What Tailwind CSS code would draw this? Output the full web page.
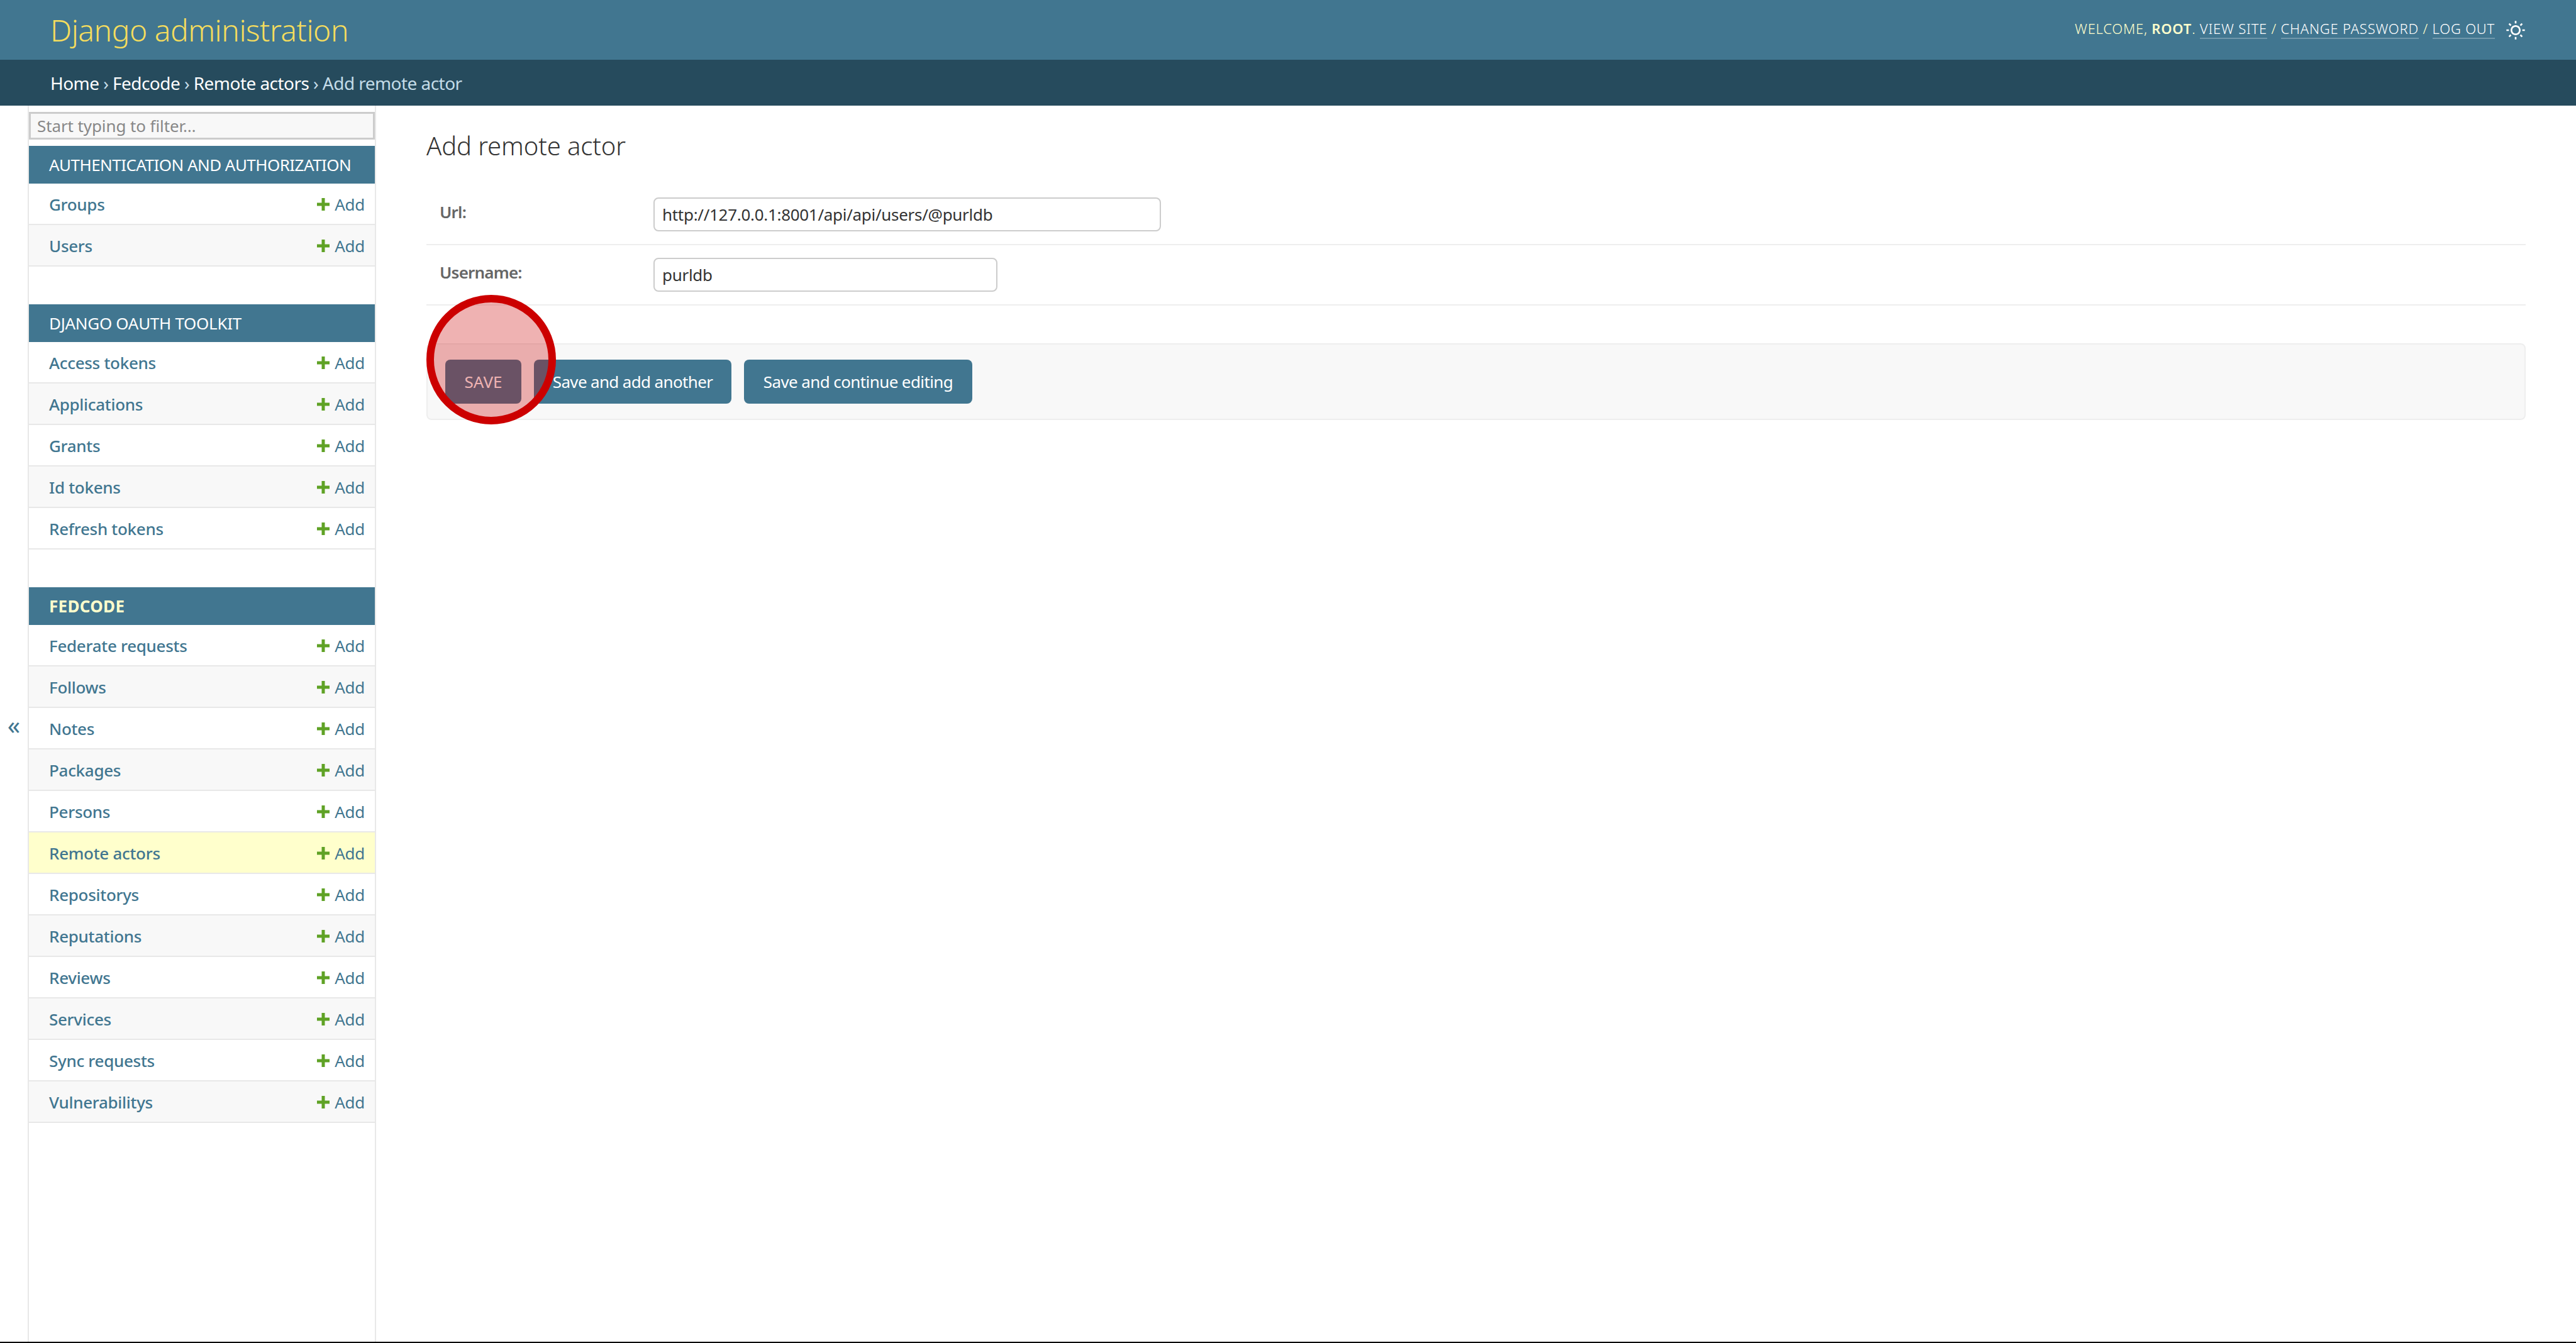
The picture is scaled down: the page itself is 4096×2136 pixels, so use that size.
<!DOCTYPE html>
<html lang="en">
<head>
    <meta charset="UTF-8">
    <title>Add remote actor | Django site admin</title>
    <script src="https://cdn.jsdelivr.net/npm/@tailwindcss/browser@4"></script>
</head>
<body class="relative flex h-screen flex-col overflow-hidden bg-white font-['Noto_Sans',sans-serif] text-[26px] text-[#333]">
    <!-- Header -->
    <header class="flex h-[95px] shrink-0 items-center justify-between bg-[#417690] pl-[80px] pr-[80px]">
        <h1 class="text-[48px] font-light tracking-[-0.5px] text-[#f5dd5d]">Django administration</h1>
        <div class="flex items-center gap-[17px] text-[22px] font-light uppercase tracking-[0.8px] text-[#ffffcc]">
            <div class="-mt-[4px]">
                Welcome, <strong class="font-semibold">root</strong>.
                <a class="border-b-2 border-white/25 text-white">View site</a> /
                <a class="border-b-2 border-white/25 text-white">Change password</a> /
                <a class="border-b-2 border-white/25 text-white">Log out</a>
            </div>
            <svg class="h-[32px] w-[32px] fill-white" viewBox="0 0 24 24"><path d="M12 18C8.68629 18 6 15.3137 6 12C6 8.68629 8.68629 6 12 6C15.3137 6 18 8.68629 18 12C18 15.3137 15.3137 18 12 18ZM12 16C14.2091 16 16 14.2091 16 12C16 9.79086 14.2091 8 12 8C9.79086 8 8 9.79086 8 12C8 14.2091 9.79086 16 12 16ZM11 1H13V4H11V1ZM11 20H13V23H11V20ZM3.51472 4.92893L4.92893 3.51472L7.05025 5.63604L5.63604 7.05025L3.51472 4.92893ZM16.9497 18.364L18.364 16.9497L20.4853 19.0711L19.0711 20.4853L16.9497 18.364ZM19.0711 3.51472L20.4853 4.92893L18.364 7.05025L16.9497 5.63604L19.0711 3.51472ZM5.63604 16.9497L7.05025 18.364L4.92893 20.4853L3.51472 19.0711L5.63604 16.9497ZM23 11V13H20V11H23ZM4 11V13H1V11H4Z"/></svg>
        </div>
    </header>

    <!-- Breadcrumbs -->
    <div class="flex h-[73px] shrink-0 items-center bg-[#264b5d] px-[80px] text-[28px] tracking-[-0.55px] text-[#c4dce8]">
        <a class="text-white">Home</a>&nbsp;›&nbsp;<a class="text-white">Fedcode</a>&nbsp;›&nbsp;<a class="text-white">Remote actors</a>&nbsp;›&nbsp;Add remote actor
    </div>

    <div class="flex min-h-0 flex-1 border-b-2 border-black">
        <!-- Toggle -->
        <div class="flex w-[46px] shrink-0 items-center justify-center border-r-2 border-[#e8e8e8] pt-[4px] text-[40px] text-[#417690]">«</div>

        <!-- Sidebar -->
        <aside class="w-[552px] shrink-0 border-r-2 border-[#e8e8e8] tracking-[-0.3px]">
            <div class="py-[10px]">
                <input class="block h-[44px] w-full border-[3px] border-[#cccccc] bg-[#f8f8f8] px-[10px] text-[26px] tracking-[-0.1px] placeholder:text-[#888]" placeholder="Start typing to filter…">
            </div>

            <section class="mb-[60px]">
                <h2 class="flex h-[60px] items-center whitespace-nowrap bg-[#417690] px-[32px] pt-[1px] text-[26px] uppercase tracking-[-0.55px] text-white">Authentication and Authorization</h2>
                <a class="flex h-[66px] items-center justify-between border-b-2 border-[#e8e8e8] bg-white pl-[32px] pr-[16px] pt-[2px] font-medium text-[#417690]">Groups<span class="flex items-center gap-[8px] font-normal"><svg class="h-[20px] w-[20px] fill-[#5fa225]" viewBox="0 0 20 20"><path d="M7.5 0h5v7.5H20v5h-7.5V20h-5v-7.5H0v-5h7.5z"/></svg>Add</span></a>
                <a class="flex h-[66px] items-center justify-between border-b-2 border-[#e8e8e8] bg-[#f8f8f8] pl-[32px] pr-[16px] pt-[2px] font-medium text-[#417690]">Users<span class="flex items-center gap-[8px] font-normal"><svg class="h-[20px] w-[20px] fill-[#5fa225]" viewBox="0 0 20 20"><path d="M7.5 0h5v7.5H20v5h-7.5V20h-5v-7.5H0v-5h7.5z"/></svg>Add</span></a>
            </section>

            <section class="mb-[60px]">
                <h2 class="flex h-[60px] items-center whitespace-nowrap bg-[#417690] px-[32px] pt-[1px] text-[26px] uppercase tracking-[-0.3px] text-white">Django OAuth Toolkit</h2>
                <a class="flex h-[66px] items-center justify-between border-b-2 border-[#e8e8e8] bg-white pl-[32px] pr-[16px] pt-[2px] font-medium text-[#417690]">Access tokens<span class="flex items-center gap-[8px] font-normal"><svg class="h-[20px] w-[20px] fill-[#5fa225]" viewBox="0 0 20 20"><path d="M7.5 0h5v7.5H20v5h-7.5V20h-5v-7.5H0v-5h7.5z"/></svg>Add</span></a>
                <a class="flex h-[66px] items-center justify-between border-b-2 border-[#e8e8e8] bg-[#f8f8f8] pl-[32px] pr-[16px] pt-[2px] font-medium text-[#417690]">Applications<span class="flex items-center gap-[8px] font-normal"><svg class="h-[20px] w-[20px] fill-[#5fa225]" viewBox="0 0 20 20"><path d="M7.5 0h5v7.5H20v5h-7.5V20h-5v-7.5H0v-5h7.5z"/></svg>Add</span></a>
                <a class="flex h-[66px] items-center justify-between border-b-2 border-[#e8e8e8] bg-white pl-[32px] pr-[16px] pt-[2px] font-medium text-[#417690]">Grants<span class="flex items-center gap-[8px] font-normal"><svg class="h-[20px] w-[20px] fill-[#5fa225]" viewBox="0 0 20 20"><path d="M7.5 0h5v7.5H20v5h-7.5V20h-5v-7.5H0v-5h7.5z"/></svg>Add</span></a>
                <a class="flex h-[66px] items-center justify-between border-b-2 border-[#e8e8e8] bg-[#f8f8f8] pl-[32px] pr-[16px] pt-[2px] font-medium text-[#417690]">Id tokens<span class="flex items-center gap-[8px] font-normal"><svg class="h-[20px] w-[20px] fill-[#5fa225]" viewBox="0 0 20 20"><path d="M7.5 0h5v7.5H20v5h-7.5V20h-5v-7.5H0v-5h7.5z"/></svg>Add</span></a>
                <a class="flex h-[66px] items-center justify-between border-b-2 border-[#e8e8e8] bg-white pl-[32px] pr-[16px] pt-[2px] font-medium text-[#417690]">Refresh tokens<span class="flex items-center gap-[8px] font-normal"><svg class="h-[20px] w-[20px] fill-[#5fa225]" viewBox="0 0 20 20"><path d="M7.5 0h5v7.5H20v5h-7.5V20h-5v-7.5H0v-5h7.5z"/></svg>Add</span></a>
            </section>

            <section>
                <h2 class="flex h-[60px] items-center bg-[#417690] px-[32px] pt-[1px] text-[26px] font-bold uppercase tracking-[0.3px] text-[#ffffcc]">Fedcode</h2>
                <a class="flex h-[66px] items-center justify-between border-b-2 border-[#e8e8e8] bg-white pl-[32px] pr-[16px] pt-[2px] font-medium text-[#417690]">Federate requests<span class="flex items-center gap-[8px] font-normal"><svg class="h-[20px] w-[20px] fill-[#5fa225]" viewBox="0 0 20 20"><path d="M7.5 0h5v7.5H20v5h-7.5V20h-5v-7.5H0v-5h7.5z"/></svg>Add</span></a>
                <a class="flex h-[66px] items-center justify-between border-b-2 border-[#e8e8e8] bg-[#f8f8f8] pl-[32px] pr-[16px] pt-[2px] font-medium text-[#417690]">Follows<span class="flex items-center gap-[8px] font-normal"><svg class="h-[20px] w-[20px] fill-[#5fa225]" viewBox="0 0 20 20"><path d="M7.5 0h5v7.5H20v5h-7.5V20h-5v-7.5H0v-5h7.5z"/></svg>Add</span></a>
                <a class="flex h-[66px] items-center justify-between border-b-2 border-[#e8e8e8] bg-white pl-[32px] pr-[16px] pt-[2px] font-medium text-[#417690]">Notes<span class="flex items-center gap-[8px] font-normal"><svg class="h-[20px] w-[20px] fill-[#5fa225]" viewBox="0 0 20 20"><path d="M7.5 0h5v7.5H20v5h-7.5V20h-5v-7.5H0v-5h7.5z"/></svg>Add</span></a>
                <a class="flex h-[66px] items-center justify-between border-b-2 border-[#e8e8e8] bg-[#f8f8f8] pl-[32px] pr-[16px] pt-[2px] font-medium text-[#417690]">Packages<span class="flex items-center gap-[8px] font-normal"><svg class="h-[20px] w-[20px] fill-[#5fa225]" viewBox="0 0 20 20"><path d="M7.5 0h5v7.5H20v5h-7.5V20h-5v-7.5H0v-5h7.5z"/></svg>Add</span></a>
                <a class="flex h-[66px] items-center justify-between border-b-2 border-[#e8e8e8] bg-white pl-[32px] pr-[16px] pt-[2px] font-medium text-[#417690]">Persons<span class="flex items-center gap-[8px] font-normal"><svg class="h-[20px] w-[20px] fill-[#5fa225]" viewBox="0 0 20 20"><path d="M7.5 0h5v7.5H20v5h-7.5V20h-5v-7.5H0v-5h7.5z"/></svg>Add</span></a>
                <a class="flex h-[66px] items-center justify-between border-b-2 border-[#e8e8e8] bg-[#ffffcc] pl-[32px] pr-[16px] pt-[2px] font-medium text-[#417690]">Remote actors<span class="flex items-center gap-[8px] font-normal"><svg class="h-[20px] w-[20px] fill-[#5fa225]" viewBox="0 0 20 20"><path d="M7.5 0h5v7.5H20v5h-7.5V20h-5v-7.5H0v-5h7.5z"/></svg>Add</span></a>
                <a class="flex h-[66px] items-center justify-between border-b-2 border-[#e8e8e8] bg-white pl-[32px] pr-[16px] pt-[2px] font-medium text-[#417690]">Repositorys<span class="flex items-center gap-[8px] font-normal"><svg class="h-[20px] w-[20px] fill-[#5fa225]" viewBox="0 0 20 20"><path d="M7.5 0h5v7.5H20v5h-7.5V20h-5v-7.5H0v-5h7.5z"/></svg>Add</span></a>
                <a class="flex h-[66px] items-center justify-between border-b-2 border-[#e8e8e8] bg-[#f8f8f8] pl-[32px] pr-[16px] pt-[2px] font-medium text-[#417690]">Reputations<span class="flex items-center gap-[8px] font-normal"><svg class="h-[20px] w-[20px] fill-[#5fa225]" viewBox="0 0 20 20"><path d="M7.5 0h5v7.5H20v5h-7.5V20h-5v-7.5H0v-5h7.5z"/></svg>Add</span></a>
                <a class="flex h-[66px] items-center justify-between border-b-2 border-[#e8e8e8] bg-white pl-[32px] pr-[16px] pt-[2px] font-medium text-[#417690]">Reviews<span class="flex items-center gap-[8px] font-normal"><svg class="h-[20px] w-[20px] fill-[#5fa225]" viewBox="0 0 20 20"><path d="M7.5 0h5v7.5H20v5h-7.5V20h-5v-7.5H0v-5h7.5z"/></svg>Add</span></a>
                <a class="flex h-[66px] items-center justify-between border-b-2 border-[#e8e8e8] bg-[#f8f8f8] pl-[32px] pr-[16px] pt-[2px] font-medium text-[#417690]">Services<span class="flex items-center gap-[8px] font-normal"><svg class="h-[20px] w-[20px] fill-[#5fa225]" viewBox="0 0 20 20"><path d="M7.5 0h5v7.5H20v5h-7.5V20h-5v-7.5H0v-5h7.5z"/></svg>Add</span></a>
                <a class="flex h-[66px] items-center justify-between border-b-2 border-[#e8e8e8] bg-white pl-[32px] pr-[16px] pt-[2px] font-medium text-[#417690]">Sync requests<span class="flex items-center gap-[8px] font-normal"><svg class="h-[20px] w-[20px] fill-[#5fa225]" viewBox="0 0 20 20"><path d="M7.5 0h5v7.5H20v5h-7.5V20h-5v-7.5H0v-5h7.5z"/></svg>Add</span></a>
                <a class="flex h-[66px] items-center justify-between border-b-2 border-[#e8e8e8] bg-[#f8f8f8] pl-[32px] pr-[16px] pt-[2px] font-medium text-[#417690]">Vulnerabilitys<span class="flex items-center gap-[8px] font-normal"><svg class="h-[20px] w-[20px] fill-[#5fa225]" viewBox="0 0 20 20"><path d="M7.5 0h5v7.5H20v5h-7.5V20h-5v-7.5H0v-5h7.5z"/></svg>Add</span></a>
            </section>
        </aside>

        <!-- Content -->
        <main class="min-w-0 flex-1 pl-[80px] pr-[80px] pt-[40px]">
            <h1 class="mb-[40px] text-[40px] font-light leading-[48px] tracking-[-0.1px]">Add remote actor</h1>
            <div class="flex h-[94px] items-start border-b-2 border-[#eeeeee] pl-[21px] pt-[18px]">
                <label class="mt-[4px] w-[340px] font-semibold tracking-[-0.8px] text-[#666]">Url:</label>
                <input class="h-[54px] w-[807px] rounded-[8px] border-2 border-[#cccccc] px-[12px] text-[26px] tracking-[-0.3px] text-[#333]" value="http://127.0.0.1:8001/api/api/users/@purldb">
            </div>
            <div class="flex h-[96px] items-start border-b-2 border-[#eeeeee] pl-[21px] pt-[20px]">
                <label class="mt-[4px] w-[340px] font-semibold tracking-[-0.8px] text-[#666]">Username:</label>
                <input class="h-[54px] w-[547px] rounded-[8px] border-2 border-[#cccccc] px-[12px] text-[26px] tracking-[-0.3px] text-[#333]" value="purldb">
            </div>
            <div class="mt-[60px] flex h-[122px] items-center gap-[20px] rounded-[8px] border-2 border-[#eeeeee] bg-[#f8f8f8] pl-[28px]">
                <button class="h-[70px] w-[121px] rounded-[8px] bg-[#417690] text-[26px] uppercase text-white">Save</button>
                <button class="h-[70px] w-[314px] rounded-[8px] bg-[#417690] text-[26px] tracking-[-0.65px] text-white">Save and add another</button>
                <button class="h-[70px] w-[363px] rounded-[8px] bg-[#417690] text-[26px] tracking-[-0.6px] text-white">Save and continue editing</button>
            </div>
        </main>
    </div>

    <!-- Annotation circle over the save button -->
    <div class="absolute left-[678px] top-[469px] h-[206px] w-[206px] rounded-full border-[12px] border-[#cc0000] bg-[#cc0000]/30"></div>
</body>
</html>
